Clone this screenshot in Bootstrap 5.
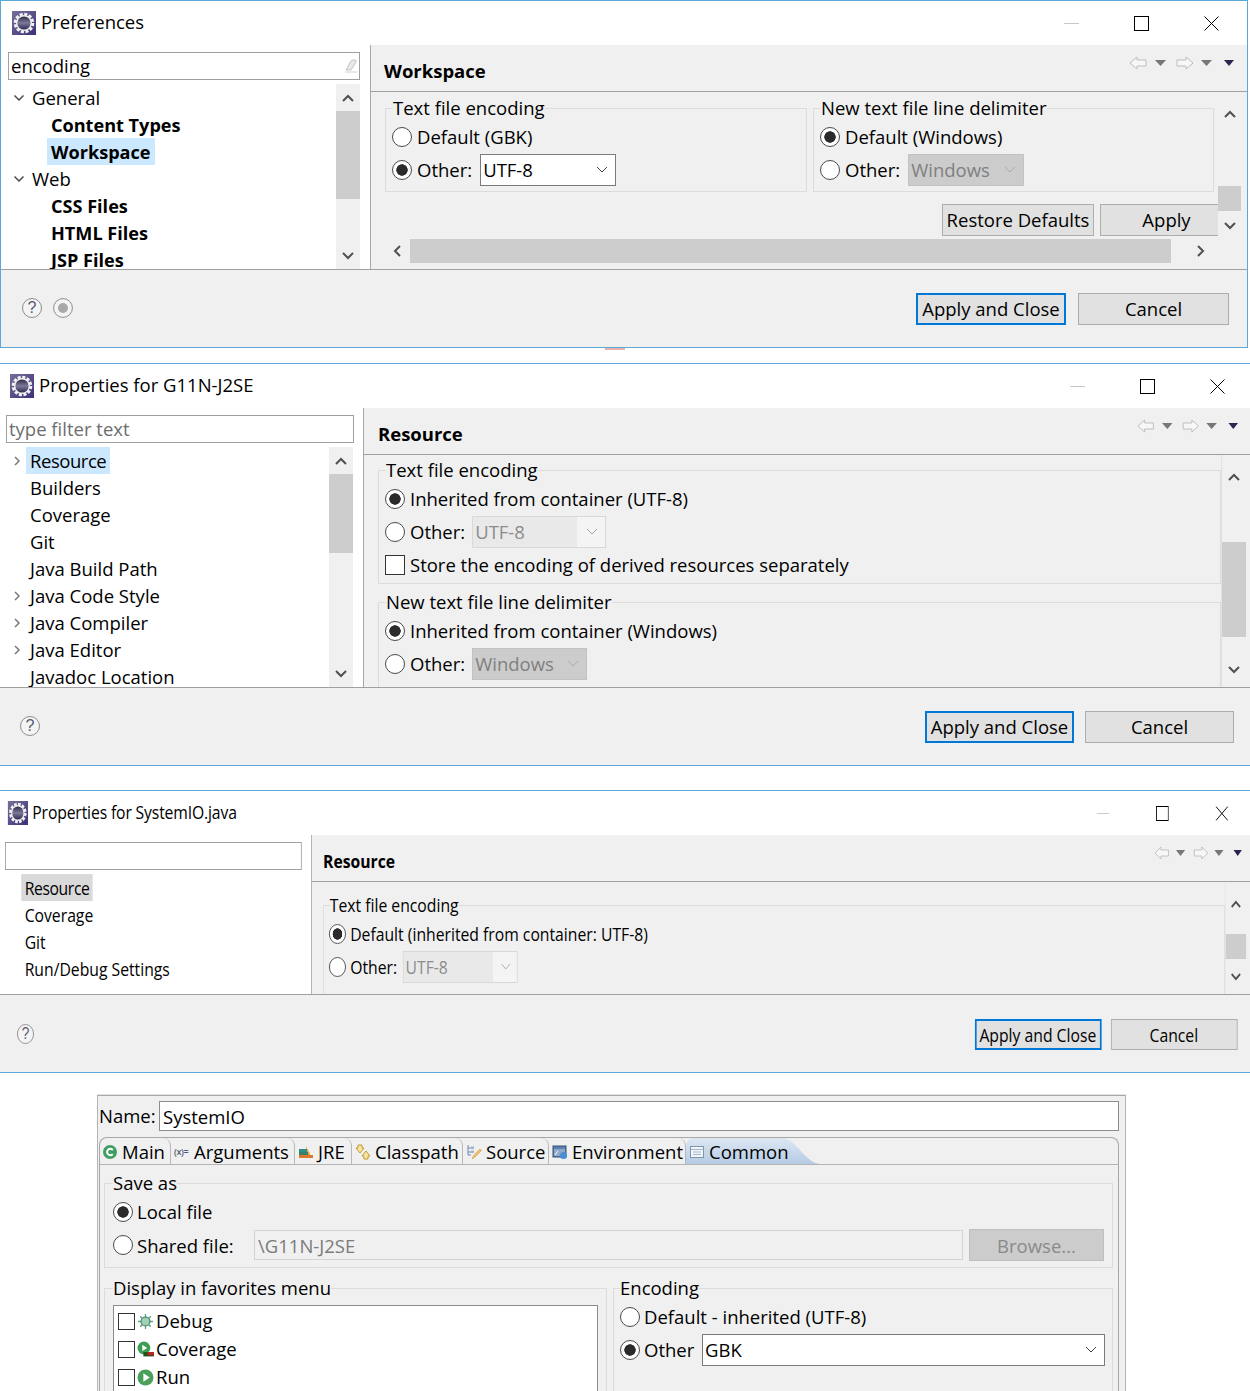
<!DOCTYPE html>
<html lang="en">
<head>
  <meta charset="UTF-8">
  <meta name="viewport" content="width=device-width, initial-scale=1.0">
  <title>Eclipse encoding settings</title>
  <link href="https://cdn.jsdelivr.net/npm/bootstrap@5.3.0/dist/css/bootstrap.min.css" rel="stylesheet">
  <style>
    body { margin: 0; background: #fff; color: #000; font-family: "Open Sans", "Liberation Sans", sans-serif; font-size: 18.5px; line-height: 1.2; height: 1391px; overflow: hidden; }
    svg { display: block; flex: none; }

    /* windows */
    .swin { border-top: 1px solid #5aa9d6; border-bottom: 1px solid #5aa9d6; background: #f0f0f0; }
    .swin-a { width: 1248px; height: 348px; border-left: 1px solid #5aa9d6; border-right: 1px solid #5aa9d6; }
    .swin-b { height: 403px; margin-top: 15px; }
    /* this one is the same dialog squeezed sideways in the screenshot */
    .squeeze-box { margin-top: 24px; height: 283px; overflow: hidden; }
    .swin-c { width: 1470.5px; height: 283px; transform: scaleX(.85); transform-origin: 0 0; }
    .red-tick { width: 20px; height: 2px; margin-left: 605px; margin-bottom: -2px; background: #e8b4aa; }
    .swin-top { height: 44px; background: #fff; }
    .swin-top > span { padding-bottom: 2px; }
    .swin-c .swin-top > span { letter-spacing: -.17px; }
    .app-ico { width: 24px; height: 24px; margin-right: 5px; }
    .swin-a .swin-top { padding-left: 11px; }
    .swin-b .swin-top { padding-left: 10px; }
    .swin-c .swin-top { padding-left: 9px; }
    .swin-ctrls { margin-left: auto; gap: 55px; color: #000; }
    .swin-a .swin-ctrls { padding-right: 28px; }
    .swin-b .swin-ctrls { padding-right: 25px; }
    .swin-c .swin-ctrls { padding-right: 26px; }
    .swin-body { border-bottom: 1px solid #a0a0a0; box-sizing: content-box; }
    .swin-a .swin-body { height: 224px; }
    .swin-b .swin-body { height: 279px; }
    .swin-c .swin-body { height: 159px; }

    /* left side */
    .tree-side { flex: none; background: #fff; border-right: 1px solid #a8a8a8; }
    .swin-a .tree-side { width: 370px; }
    .swin-b .tree-side { width: 364px; }
    .swin-c .tree-side { width: 367px; }
    .filter-wrap { height: 28px; margin-top: 7px; margin-bottom: 4px; border: 1px solid #a0a0a0; align-items: center; flex: none; }
    .swin-a .filter-wrap { width: 352px; margin-left: 7px; }
    .swin-b .filter-wrap { width: 348px; margin-left: 6px; }
    .swin-c .filter-wrap { width: 349px; margin-left: 6px; }
    .filter-wrap .form-control { border: 0; border-radius: 0; padding: 0 2px; height: 26px; font-size: inherit; line-height: 26px; color: #000; background: transparent; box-shadow: none; }
    .filter-wrap .form-control::placeholder { color: #6e6e6e; opacity: 1; }
    .tree-rows { margin: -1px 0 0; padding: .5px 0 0; min-width: 0; }
    .tree-rows li { height: 27px; line-height: 27px; display: flex; align-items: center; white-space: nowrap; }
    .twist { width: 10px; height: 10px; margin-top: 2px; }
    .swin-a .twist { margin: 2px 8px 0 13px; }
    .swin-a .deep { padding-left: 46px; }
    .swin-a .tree-rows span { padding: 0 4px; font-weight: 700; font-size: 18.1px; line-height: 29px; }
    .swin-a .tree-rows .plain { padding: 0; font-weight: 400; font-size: inherit; line-height: 27px; }
    .swin-b .twist, .swin-b .no-twist { width: 10px; margin: 2px 4px 0 12px; flex: none; }
    .tree-rows span { height: 27px; padding: 0 4px; }
    .swin-c .tree-rows li { padding-left: 25px; }
    .picked { background: #cce8ff; }
    .swin-b .picked, .swin-c .picked { letter-spacing: -.45px; }
    .swin-c .picked { background: #d9d9d9; }

    /* scrollbars */
    .sbar { width: 24px; flex: none; background: #f0f0f0; display: flex; flex-direction: column; }
    .sbar-slot { height: 27px; flex: none; display: flex; align-items: center; justify-content: center; }
    .sbar-thumb { background: #cdcdcd; flex: none; }
    .tree-side .sbar { margin-right: 10px; }
    .thumb-a1 { height: 88px; }
    .thumb-b1 { height: 79px; }
    .page-side { min-width: 0; }
    .page-head { height: 47px; border-bottom: 1px solid #a0a0a0; padding-top: 6px; font-weight: 700; display: flex; align-items: center; flex: none; }
    .swin-a .page-head { padding-left: 13px; }
    .swin-b .page-head { padding-left: 14px; }
    .swin-c .page-head { padding-left: 13px; }
    .nav-arrows { height: 14px; align-self: flex-start; margin-top: 5px; margin-left: auto; }
    .swin-a .nav-arrows { width: 108px; margin-right: 11px; }
    .swin-b .nav-arrows { width: 104px; margin-right: 10px; }
    .swin-c .nav-arrows { width: 106px; margin-right: 8px; }
    .page-scroll { overflow: hidden; min-width: 0; flex: 1 1 auto; }
    .swin-a .page-main { height: 147px; }
    .swin-b .page-main { height: 232px; }
    .swin-c .page-main { height: 112px; }
    .swin-b .page-scroll { padding-left: 14px; border-right: 1px solid #e2e2e2; }
    .swin-c .page-scroll { padding-left: 13px; border-right: 1px solid #e2e2e2; }
    .swin-a .page-scroll { padding-left: 14px; }
    .swin-a .page-side .sbar { width: 23px; margin-right: 6px; }
    .swin-b .page-side .sbar { margin-right: 4px; }
    .swin-c .page-side .sbar { margin-right: 5px; }
    .va-thumb { height: 25px; margin-top: 59px; }
    .va-down { margin-top: 1px; }
    .vb-thumb { height: 95px; margin-top: 52px; }
    .vb-down { margin-top: 19px; }
    .vc-thumb { height: 25px; margin-top: 17px; }
    .vc-down { margin-top: 4px; }
    .sbar-top { margin-top: 8px; }
    .hbar { height: 24px; padding-left: 14px; align-items: center; }
    .hbar-end { width: 25px; padding-left: 7px; display: flex; flex: none; }
    .hbar-thumb { width: 761px; height: 24px; background: #cdcdcd; flex: none; }
    .hbar-far { width: 60px; display: flex; justify-content: center; flex: none; }

    /* groups */
    .grp { border: 1px solid #dcdcdc; padding: 0 6px 5px 6px; }
    .grp legend { float: none; width: auto; margin: 0 0 0 1px; padding: 0; font-size: inherit; line-height: 24px; }
    .opt-line { height: 33px; display: flex; align-items: center; white-space: nowrap; }
    .opt-line label { margin: 0 0 0 5px; padding-top: 2px; }
    .pick-dot.form-check-input { width: 20px; height: 20px; margin: 0; flex: none; border: 1px solid #4a4a4a; background-color: #fff; box-shadow: none; }
    .pick-dot.form-check-input:checked { background-color: #fff; border-color: #4a4a4a; background-image: radial-gradient(circle, #2b2b2b 0 5.4px, transparent 6px); background-size: 100% 100%; }
    .pick-box.form-check-input { width: 20px; height: 20px; margin: 0; flex: none; border: 1px solid #333; border-radius: 0; background-color: #fff; }
    .grp-a1 { width: 422px; margin-top: 4px; }
    .grp-a2 { width: 401px; margin: 4px 0 0 6px; }
    .grp-b1 { margin-top: 3px; padding-bottom: 2px; }
    .grp-b2 { margin-top: 6px; padding-bottom: 30px; }
    .grp-c1 { margin-top: 11px; padding-bottom: 30px; }

    /* selects */
    .enc-select.form-select { border: 1px solid #7a7a7a; border-radius: 0; height: 32px; padding: 0 24px 0 2px; font-size: inherit; line-height: 30px; color: #000; background-color: #fff; box-shadow: none; flex: none; background-image: url("data:image/svg+xml,%3csvg xmlns='http://www.w3.org/2000/svg' viewBox='0 0 12 7'%3e%3cpath fill='none' stroke='%23444' d='M1 1l5 5 5-5'/%3e%3c/svg%3e"); background-size: 12px 7px; background-position: right 7px center; background-repeat: no-repeat; }
    .enc-off.form-select:disabled { border-color: #d8d8d8; color: #8c8c8c; background-color: #f4f4f4; background-image: url("data:image/svg+xml,%3csvg xmlns='http://www.w3.org/2000/svg' viewBox='0 0 12 7'%3e%3cpath fill='none' stroke='%23aaa' d='M1 1l5 5 5-5'/%3e%3c/svg%3e"), linear-gradient(#e9e9e9, #e9e9e9); background-size: 12px 7px, 79% 100%; background-position: right 7px center, left center; }
    .eol-off.form-select:disabled { border-color: #c2c2c2; color: #808080; background-color: #cccccc; background-image: url("data:image/svg+xml,%3csvg xmlns='http://www.w3.org/2000/svg' viewBox='0 0 12 7'%3e%3cpath fill='none' stroke='%23aaa' d='M1 1l5 5 5-5'/%3e%3c/svg%3e"); }
    .sel-a1 { width: 136px; margin-left: 8px; }
    .sel-a2 { width: 116px; margin-left: 8px; }
    .sel-b1 { width: 134px; margin-left: 7px; }
    .sel-b2 { width: 115px; margin-left: 7px; }
    .sel-c1 { width: 135px; margin-left: 7px; }

    /* buttons */
    .swt-btn.btn { height: 32px; padding: 0; border: 1px solid #adadad; border-radius: 0; background: #e1e1e1; color: #000; font-size: inherit; line-height: 28px; flex: none; white-space: nowrap; }
    .swt-main.btn { border: 2px solid #0078d7; }
    .swt-off.btn:disabled { background: #cccccc; border-color: #bfbfbf; color: #8a8a8a; opacity: 1; }
    .btn-row-a { margin-top: 12px; }
    .btn-restore { width: 152px; margin-left: 557px; }
    .btn-apply { width: 133px; margin-left: 6px; }
    .swin-foot { height: 77px; padding-top: 23px; align-items: flex-start; }
    .swin-c .swin-foot { padding-top: 24px; }
    .swin-c .swt-btn.btn { height: 31px; }
    .help-ico { width: 20px; height: 20px; margin-top: 5px; flex: none; display: flex; align-items: center; justify-content: center; border: 1px solid #8d8d8d; border-radius: 50%; background: #f4f4f4; color: #555a70; font-family: "Liberation Sans", sans-serif; font-size: 16px; line-height: 1; }
    .foot-ico { width: 20px; height: 20px; margin: 5px 0 0 11px; }
    .swin-a .swin-foot { padding-left: 21px; padding-right: 18px; }
    .swin-b .swin-foot { padding-left: 20px; padding-right: 16px; }
    .swin-c .swin-foot { padding-left: 20px; padding-right: 15px; }
    .foot-btns { margin-left: auto; gap: 11px; }
    .swin-a .foot-btns { gap: 12px; }
    .wide-btn { width: 149px; }
    .swin-a .wide-btn { width: 151px; }
    .swin-a .wide-btn.swt-main { width: 150px; }

    /* launch config panel */
    .conf-panel { width: 1029px; height: 296px; margin: 22px 0 0 97px; border-top: 1px solid #a8a8a8; border-left: 1px solid #b4b4b4; border-right: 1px solid #b4b4b4; background: #f0f0f0; box-shadow: 0 -1px 0 #e4e4e4; overflow: hidden; }
    .conf-panel .opt-line label { margin-left: 4px; }
    .name-row { padding: 5px 6px 0 0; align-items: center; }
    .name-row label { width: 61px; margin: 0; padding-left: 1px; flex: none; }
    .name-row .form-control { height: 30px; border: 1px solid #8c8c8c; border-radius: 0; padding: 0 3px; font-size: inherit; color: #000; }
    .conf-folder { margin: 6px 6px 0 1px; border: 1px solid #a8a8a8; border-bottom: 0; border-radius: 8px 8px 0 0; height: 270px; }
    .fold-tabs { height: 27px; flex-wrap: nowrap; border-bottom: 1px solid #b4b4b4; }
    .fold-tabs .nav-link { height: 26px; padding: 2px 0 0 3px; color: #000; display: flex; align-items: center; gap: 4px; white-space: nowrap; border-right: 1px solid #b8b8b8; border-top-right-radius: 8px; }
    .fold-tabs .nav-link svg { width: 16px; height: 16px; }
    .fold-tabs .tab-main { width: 71px; padding-left: 2px; }
    .tab-args { width: 124px; }
    .tab-jre { width: 57px; }
    .tab-cp { width: 111px; }
    .tab-src { width: 86px; }
    .tab-env { width: 137px; }
    .fold-tabs .tab-common { width: 134px; border: 0; background: linear-gradient(#dde7f3, #b5cbe4); clip-path: path('M0 26 L0 8 Q1 0 8 0 L98 0 C110 2 120 25 134 26 Z'); }
    .args-mark { width: 16px; font-size: 9px; color: #4c5d78; letter-spacing: -.4px; font-weight: 600; line-height: 16px; }
    .grp-save { margin: 6px 5px 0 4px; padding: 0 8px 5px 8px; }
    .grp-save legend, .grp-fav legend { margin-left: 0; }
    .shared-row { height: 34px; }
    .off-field.form-control:disabled { width: 709px; height: 30px; margin-left: auto; border: 1px solid #d4d4d4; border-radius: 0; background: #f0f0f0; padding: 0 3px; font-size: inherit; color: #7b7b7b; opacity: 1; }
    .browse-btn { width: 135px; margin-left: 6px; }
    .swt-btn.browse-btn { padding-top: 1px; }
    .conf-cols { margin: 8px 5px 0 4px; gap: 6px; }
    .grp-fav { width: 503px; padding: 0 8px 5px 8px; flex: none; }
    .grp-enc { width: 500px; padding: 0 7px 5px 6px; flex: none; }
    .grp-enc legend { margin-left: 0; }
    .fav-list { margin-top: 5px; height: 100px; border: 1px solid #8c8c8c; background: #fff; padding: 1px 0 0 4px; }
    .fav-list li { height: 28px; display: flex; align-items: center; }
    .fav-list .form-check-input { width: 17px; height: 17px; }
    .fav-list svg { width: 17px; height: 17px; margin: 0 2px; }
    .enc-gbk { width: 403px; margin-left: auto; }
  </style>
</head>
<body>
  <!-- shared icons -->
  <svg width="0" height="0" class="d-block">
    <defs>
      <linearGradient id="purp" x1="0" y1="0" x2="1" y2="1"><stop offset="0" stop-color="#74719a"/><stop offset="1" stop-color="#3d2f78"/></linearGradient>
      <linearGradient id="disc" x1="0" y1="0" x2="0" y2="1"><stop offset="0" stop-color="#2d2b44"/><stop offset=".5" stop-color="#7c7a99"/><stop offset="1" stop-color="#2b2950"/></linearGradient>
    </defs>
    <symbol id="gear" viewBox="0 0 24 24" preserveAspectRatio="none">
      <rect width="24" height="24" fill="url(#purp)"/>
      <circle cx="12" cy="12" r="8.6" fill="none" stroke="#f2f2f2" stroke-width="3.4" stroke-dasharray="3 1.5"/>
      <circle cx="12" cy="12" r="8" fill="#ececec"/>
      <circle cx="12" cy="12" r="6.6" fill="url(#disc)"/>
    </symbol>
    <symbol id="win-min" viewBox="0 0 15 15"><path d="M0 7.5h15" stroke="#c8c8c8" fill="none"/></symbol>
    <symbol id="win-max" viewBox="0 0 15 15" preserveAspectRatio="none"><rect x=".5" y=".5" width="14" height="14" fill="none" stroke="#000"/></symbol>
    <symbol id="win-x" viewBox="0 0 15 15" preserveAspectRatio="none"><path d="M.5.5l14 14M14.5.5l-14 14" stroke="#000" fill="none"/></symbol>
    <symbol id="ch-up" viewBox="0 0 14 10"><path d="M2 8l5-5 5 5" fill="none" stroke="#505050" stroke-width="2"/></symbol>
    <symbol id="ch-down" viewBox="0 0 14 10"><path d="M2 2l5 5 5-5" fill="none" stroke="#505050" stroke-width="2"/></symbol>
    <symbol id="ch-left" viewBox="0 0 10 14"><path d="M8 2L3 7l5 5" fill="none" stroke="#505050" stroke-width="2"/></symbol>
    <symbol id="ch-right" viewBox="0 0 10 14"><path d="M2 2l5 5-5 5" fill="none" stroke="#505050" stroke-width="2"/></symbol>
    <symbol id="tw-open" viewBox="0 0 10 10"><path d="M.5 2.5L5 7l4.5-4.5" fill="none" stroke="#4a4a4a" stroke-width="1.5"/></symbol>
    <symbol id="tw-shut" viewBox="0 0 10 10"><path d="M3 1l4 4-4 4" fill="none" stroke="#7a7a7a" stroke-width="1.5"/></symbol>
    <symbol id="arrows" viewBox="0 0 108 14" preserveAspectRatio="none">
      <path d="M2 7l7-6v3h9v6H9v3z" fill="#f7f7f7" stroke="#bdbdbd"/>
      <path d="M27 4h11l-5.5 6z" fill="#777"/>
      <path d="M65 7l-7-6v3h-9v6h9v3z" fill="#f7f7f7" stroke="#bdbdbd"/>
      <path d="M73 4h11l-5.5 6z" fill="#777"/>
      <path d="M96 4h10l-5 6z" fill="#2a2550"/>
    </symbol>
    <symbol id="rec" viewBox="0 0 20 20">
      <circle cx="10" cy="10" r="9.4" fill="#f4f4f4" stroke="#8d8d8d"/>
      <circle cx="10" cy="10" r="5" fill="#a9a9a9"/>
    </symbol>
  </svg>

  <!-- Preferences -->
  <section class="swin swin-a">
    <div class="swin-top d-flex align-items-center">
      <svg class="app-ico"><use href="#gear"/></svg>
      <span>Preferences</span>
      <div class="swin-ctrls d-flex">
        <svg width="15" height="15"><use href="#win-min"/></svg>
        <svg width="15" height="15"><use href="#win-max"/></svg>
        <svg width="15" height="15"><use href="#win-x"/></svg>
      </div>
    </div>
    <div class="swin-body d-flex">
      <div class="tree-side d-flex flex-column">
        <div class="filter-wrap d-flex">
          <input type="text" class="form-control" value="encoding">
          <svg width="16" height="16" viewBox="0 0 16 16"><path d="M3 12L8 3q1-1 2-1h2q2 0 1 2l-5 8z" fill="#e8e8e8" stroke="#c4c4c4"/><path d="M2 14h12" stroke="#d2d2d2"/></svg>
        </div>
        <div class="d-flex flex-grow-1 overflow-hidden">
          <ul class="list-unstyled tree-rows flex-grow-1">
            <li><svg class="twist"><use href="#tw-open"/></svg><span class="plain">General</span></li>
            <li class="deep"><span>Content Types</span></li>
            <li class="deep"><span class="picked">Workspace</span></li>
            <li><svg class="twist"><use href="#tw-open"/></svg><span class="plain">Web</span></li>
            <li class="deep"><span>CSS Files</span></li>
            <li class="deep"><span>HTML Files</span></li>
            <li class="deep"><span>JSP Files</span></li>
          </ul>
          <div class="sbar">
            <div class="sbar-slot"><svg width="14" height="10"><use href="#ch-up"/></svg></div>
            <div class="sbar-thumb thumb-a1"></div>
            <div class="sbar-slot mt-auto"><svg width="14" height="10"><use href="#ch-down"/></svg></div>
          </div>
        </div>
      </div>
      <div class="page-side flex-grow-1 d-flex flex-column">
        <div class="page-head">
          <span>Workspace</span>
          <svg class="nav-arrows"><use href="#arrows"/></svg>
        </div>
        <div class="d-flex page-main">
          <div class="page-scroll">
            <div class="d-flex">
              <fieldset class="grp grp-a1">
                <legend>Text file encoding</legend>
                <div class="opt-line"><input class="form-check-input pick-dot" type="radio" name="a1" id="a1d"><label for="a1d">Default (GBK)</label></div>
                <div class="opt-line"><input class="form-check-input pick-dot" type="radio" name="a1" id="a1o" checked><label for="a1o">Other:</label>
                  <select class="form-select enc-select sel-a1"><option>UTF-8</option></select></div>
              </fieldset>
              <fieldset class="grp grp-a2">
                <legend>New text file line delimiter</legend>
                <div class="opt-line"><input class="form-check-input pick-dot" type="radio" name="a2" id="a2d" checked><label for="a2d">Default (Windows)</label></div>
                <div class="opt-line"><input class="form-check-input pick-dot" type="radio" name="a2" id="a2o"><label for="a2o">Other:</label>
                  <select class="form-select enc-select eol-off sel-a2" disabled><option>Windows</option></select></div>
              </fieldset>
            </div>
            <div class="d-flex btn-row-a">
              <button type="button" class="btn swt-btn btn-restore">Restore Defaults</button>
              <button type="button" class="btn swt-btn btn-apply">Apply</button>
            </div>
          </div>
          <div class="sbar">
            <div class="sbar-slot sbar-top"><svg width="14" height="10"><use href="#ch-up"/></svg></div>
            <div class="sbar-thumb va-thumb"></div>
            <div class="sbar-slot va-down"><svg width="14" height="10"><use href="#ch-down"/></svg></div>
          </div>
        </div>
        <div class="d-flex hbar">
          <div class="hbar-end"><svg width="10" height="14"><use href="#ch-left"/></svg></div>
          <div class="hbar-thumb"></div>
          <div class="hbar-far"><svg width="10" height="14"><use href="#ch-right"/></svg></div>
        </div>
      </div>
    </div>
    <div class="swin-foot d-flex">
      <span class="help-ico">?</span>
      <svg class="foot-ico"><use href="#rec"/></svg>
      <div class="foot-btns d-flex">
        <button type="button" class="btn swt-btn swt-main wide-btn">Apply and Close</button>
        <button type="button" class="btn swt-btn wide-btn">Cancel</button>
      </div>
    </div>
  </section>
  <div class="red-tick"></div>

  <!-- Properties for project -->
  <section class="swin swin-b">
    <div class="swin-top d-flex align-items-center">
      <svg class="app-ico"><use href="#gear"/></svg>
      <span>Properties for G11N-J2SE</span>
      <div class="swin-ctrls d-flex">
        <svg width="15" height="15"><use href="#win-min"/></svg>
        <svg width="15" height="15"><use href="#win-max"/></svg>
        <svg width="15" height="15"><use href="#win-x"/></svg>
      </div>
    </div>
    <div class="swin-body d-flex">
      <div class="tree-side d-flex flex-column">
        <div class="filter-wrap d-flex"><input type="text" class="form-control" placeholder="type filter text"></div>
        <div class="d-flex flex-grow-1 overflow-hidden">
          <ul class="list-unstyled tree-rows flex-grow-1">
            <li><svg class="twist"><use href="#tw-shut"/></svg><span class="picked">Resource</span></li>
            <li><i class="no-twist"></i><span>Builders</span></li>
            <li><i class="no-twist"></i><span>Coverage</span></li>
            <li><i class="no-twist"></i><span>Git</span></li>
            <li><i class="no-twist"></i><span>Java Build Path</span></li>
            <li><svg class="twist"><use href="#tw-shut"/></svg><span>Java Code Style</span></li>
            <li><svg class="twist"><use href="#tw-shut"/></svg><span>Java Compiler</span></li>
            <li><svg class="twist"><use href="#tw-shut"/></svg><span>Java Editor</span></li>
            <li><i class="no-twist"></i><span>Javadoc Location</span></li>
          </ul>
          <div class="sbar">
            <div class="sbar-slot"><svg width="14" height="10"><use href="#ch-up"/></svg></div>
            <div class="sbar-thumb thumb-b1"></div>
            <div class="sbar-slot mt-auto"><svg width="14" height="10"><use href="#ch-down"/></svg></div>
          </div>
        </div>
      </div>
      <div class="page-side flex-grow-1 d-flex flex-column">
        <div class="page-head">
          <span>Resource</span>
          <svg class="nav-arrows"><use href="#arrows"/></svg>
        </div>
        <div class="d-flex page-main">
          <div class="page-scroll">
            <fieldset class="grp grp-b1">
              <legend>Text file encoding</legend>
              <div class="opt-line"><input class="form-check-input pick-dot" type="radio" name="b1" id="b1i" checked><label for="b1i">Inherited from container (UTF-8)</label></div>
              <div class="opt-line"><input class="form-check-input pick-dot" type="radio" name="b1" id="b1o"><label for="b1o">Other:</label>
                <select class="form-select enc-select enc-off sel-b1" disabled><option>UTF-8</option></select></div>
              <div class="opt-line"><input class="form-check-input pick-box" type="checkbox" id="b1s"><label for="b1s">Store the encoding of derived resources separately</label></div>
            </fieldset>
            <fieldset class="grp grp-b2">
              <legend>New text file line delimiter</legend>
              <div class="opt-line"><input class="form-check-input pick-dot" type="radio" name="b2" id="b2i" checked><label for="b2i">Inherited from container (Windows)</label></div>
              <div class="opt-line"><input class="form-check-input pick-dot" type="radio" name="b2" id="b2o"><label for="b2o">Other:</label>
                <select class="form-select enc-select eol-off sel-b2" disabled><option>Windows</option></select></div>
            </fieldset>
          </div>
          <div class="sbar">
            <div class="sbar-slot sbar-top"><svg width="14" height="10"><use href="#ch-up"/></svg></div>
            <div class="sbar-thumb vb-thumb"></div>
            <div class="sbar-slot vb-down"><svg width="14" height="10"><use href="#ch-down"/></svg></div>
          </div>
        </div>
      </div>
    </div>
    <div class="swin-foot d-flex">
      <span class="help-ico">?</span>
      <div class="foot-btns d-flex">
        <button type="button" class="btn swt-btn swt-main wide-btn">Apply and Close</button>
        <button type="button" class="btn swt-btn wide-btn">Cancel</button>
      </div>
    </div>
  </section>

  <!-- Properties for file -->
  <div class="squeeze-box">
  <section class="swin swin-c">
    <div class="swin-top d-flex align-items-center">
      <svg class="app-ico"><use href="#gear"/></svg>
      <span>Properties for SystemIO.java</span>
      <div class="swin-ctrls d-flex">
        <svg width="15" height="15"><use href="#win-min"/></svg>
        <svg width="15" height="15"><use href="#win-max"/></svg>
        <svg width="15" height="15"><use href="#win-x"/></svg>
      </div>
    </div>
    <div class="swin-body d-flex">
      <div class="tree-side d-flex flex-column">
        <div class="filter-wrap d-flex"><input type="text" class="form-control"></div>
        <ul class="list-unstyled tree-rows">
          <li><span class="picked">Resource</span></li>
          <li><span>Coverage</span></li>
          <li><span>Git</span></li>
          <li><span>Run/Debug Settings</span></li>
        </ul>
      </div>
      <div class="page-side flex-grow-1 d-flex flex-column">
        <div class="page-head">
          <span>Resource</span>
          <svg class="nav-arrows"><use href="#arrows"/></svg>
        </div>
        <div class="d-flex page-main">
          <div class="page-scroll">
            <fieldset class="grp grp-c1">
              <legend>Text file encoding</legend>
              <div class="opt-line"><input class="form-check-input pick-dot" type="radio" name="c1" id="c1d" checked><label for="c1d">Default (inherited from container: UTF-8)</label></div>
              <div class="opt-line"><input class="form-check-input pick-dot" type="radio" name="c1" id="c1o"><label for="c1o">Other:</label>
                <select class="form-select enc-select enc-off sel-c1" disabled><option>UTF-8</option></select></div>
            </fieldset>
          </div>
          <div class="sbar">
            <div class="sbar-slot sbar-top"><svg width="14" height="10"><use href="#ch-up"/></svg></div>
            <div class="sbar-thumb vc-thumb"></div>
            <div class="sbar-slot vc-down"><svg width="14" height="10"><use href="#ch-down"/></svg></div>
          </div>
        </div>
      </div>
    </div>
    <div class="swin-foot d-flex">
      <span class="help-ico">?</span>
      <div class="foot-btns d-flex">
        <button type="button" class="btn swt-btn swt-main wide-btn">Apply and Close</button>
        <button type="button" class="btn swt-btn wide-btn">Cancel</button>
      </div>
    </div>
  </section>
  </div>

  <!-- Run configuration -->
  <section class="conf-panel">
    <div class="name-row d-flex">
      <label for="confName">Name:</label>
      <input type="text" class="form-control" id="confName" value="SystemIO">
    </div>
    <div class="conf-folder">
      <ul class="nav fold-tabs">
        <li class="nav-item"><a class="nav-link tab-main" href="#">
          <svg viewBox="0 0 16 16"><circle cx="8" cy="8" r="7" fill="#3f9e63"/><path d="M10.8 6A3.2 3.2 0 1 0 10.8 10" fill="none" stroke="#fff" stroke-width="2"/></svg>Main</a></li>
        <li class="nav-item"><a class="nav-link tab-args" href="#"><span class="args-mark">(x)=</span>Arguments</a></li>
        <li class="nav-item"><a class="nav-link tab-jre" href="#">
          <svg viewBox="0 0 16 16"><path d="M8 2l6 12H9z" fill="#e8a43a"/><rect x="1" y="5" width="8" height="3" fill="#2e8f8a"/><rect x="1" y="8" width="9" height="3" fill="#3a7f6a"/><rect x="1" y="11" width="14" height="3" fill="#d9792b"/></svg>JRE</a></li>
        <li class="nav-item"><a class="nav-link tab-cp" href="#">
          <svg viewBox="0 0 16 16"><path d="M3 1h4v3h2L5 9 1 4h2z" fill="#f6e7a8" stroke="#c09a2e"/><path d="M9 15h4v-3h2l-4-5-4 5h2z" fill="#f6e7a8" stroke="#c09a2e"/></svg>Classpath</a></li>
        <li class="nav-item"><a class="nav-link tab-src" href="#">
          <svg viewBox="0 0 16 16"><path d="M2 1v10M2 4h3M2 8h3M2 11h3" stroke="#6d88ad" fill="none"/><rect x="5" y="2.5" width="3" height="2.5" fill="#9fb4cf"/><rect x="5" y="6.5" width="3" height="2.5" fill="#9fb4cf"/><path d="M6 15l2-4 6-6 1.5 1.5-6 6z" fill="#efc36c" stroke="#c7963a" stroke-width=".6"/></svg>Source</a></li>
        <li class="nav-item"><a class="nav-link tab-env" href="#">
          <svg viewBox="0 0 16 16"><rect x="1" y="2" width="13" height="11" fill="#5b7fae" stroke="#34517c"/><rect x="2" y="5" width="11" height="7" fill="#8fa9c9"/><path d="M3 11l3-4" stroke="#fff"/><circle cx="11.5" cy="11.5" r="3.5" fill="#4b8ed0"/></svg>Environment</a></li>
        <li class="nav-item"><a class="nav-link tab-common" href="#">
          <svg viewBox="0 0 16 16"><rect x="1.5" y="2.5" width="13" height="11" fill="#f2f5f9" stroke="#7e95b0"/><path d="M1.5 5.5h13M4 8h8M4 10.5h8" stroke="#a5b6ca"/></svg>Common</a></li>
      </ul>
      <fieldset class="grp grp-save">
        <legend>Save as</legend>
        <div class="opt-line"><input class="form-check-input pick-dot" type="radio" name="sv" id="svL" checked><label for="svL">Local file</label></div>
        <div class="opt-line shared-row"><input class="form-check-input pick-dot" type="radio" name="sv" id="svS"><label for="svS">Shared file:</label>
          <input type="text" class="form-control off-field" value="\G11N-J2SE" disabled>
          <button type="button" class="btn swt-btn swt-off browse-btn" disabled>Browse...</button></div>
      </fieldset>
      <div class="d-flex conf-cols">
        <fieldset class="grp grp-fav">
          <legend>Display in favorites menu</legend>
          <ul class="list-unstyled fav-list">
            <li><input class="form-check-input pick-box" type="checkbox" aria-label="Debug">
              <svg viewBox="0 0 16 16"><path d="M8 1v14M1 8h14M3 3l10 10M13 3L3 13" stroke="#5e9f82" stroke-width="1.2"/><circle cx="8" cy="8" r="4.2" fill="#9fd0b4" stroke="#3c7f63"/></svg>Debug</li>
            <li><input class="form-check-input pick-box" type="checkbox" aria-label="Coverage">
              <svg viewBox="0 0 16 16"><circle cx="6.5" cy="6.5" r="6" fill="#3f9e55"/><path d="M5 3.5l4.5 3-4.5 3z" fill="#fff"/><rect x="6" y="10.5" width="10" height="4" fill="#1d4f1d"/><rect x="10" y="10.5" width="6" height="3" fill="#c22222"/></svg>Coverage</li>
            <li><input class="form-check-input pick-box" type="checkbox" aria-label="Run">
              <svg viewBox="0 0 16 16"><circle cx="8" cy="8" r="7.5" fill="#4aa05a"/><path d="M6 4l6 4-6 4z" fill="#fff"/></svg>Run</li>
          </ul>
        </fieldset>
        <fieldset class="grp grp-enc">
          <legend>Encoding</legend>
          <div class="opt-line"><input class="form-check-input pick-dot" type="radio" name="en" id="enD"><label for="enD">Default - inherited (UTF-8)</label></div>
          <div class="opt-line"><input class="form-check-input pick-dot" type="radio" name="en" id="enO" checked><label for="enO">Other</label>
            <select class="form-select enc-select enc-gbk"><option>GBK</option></select></div>
        </fieldset>
      </div>
    </div>
  </section>
  <script src="https://cdn.jsdelivr.net/npm/bootstrap@5.3.0/dist/js/bootstrap.bundle.min.js"></script>
</body>
</html>
